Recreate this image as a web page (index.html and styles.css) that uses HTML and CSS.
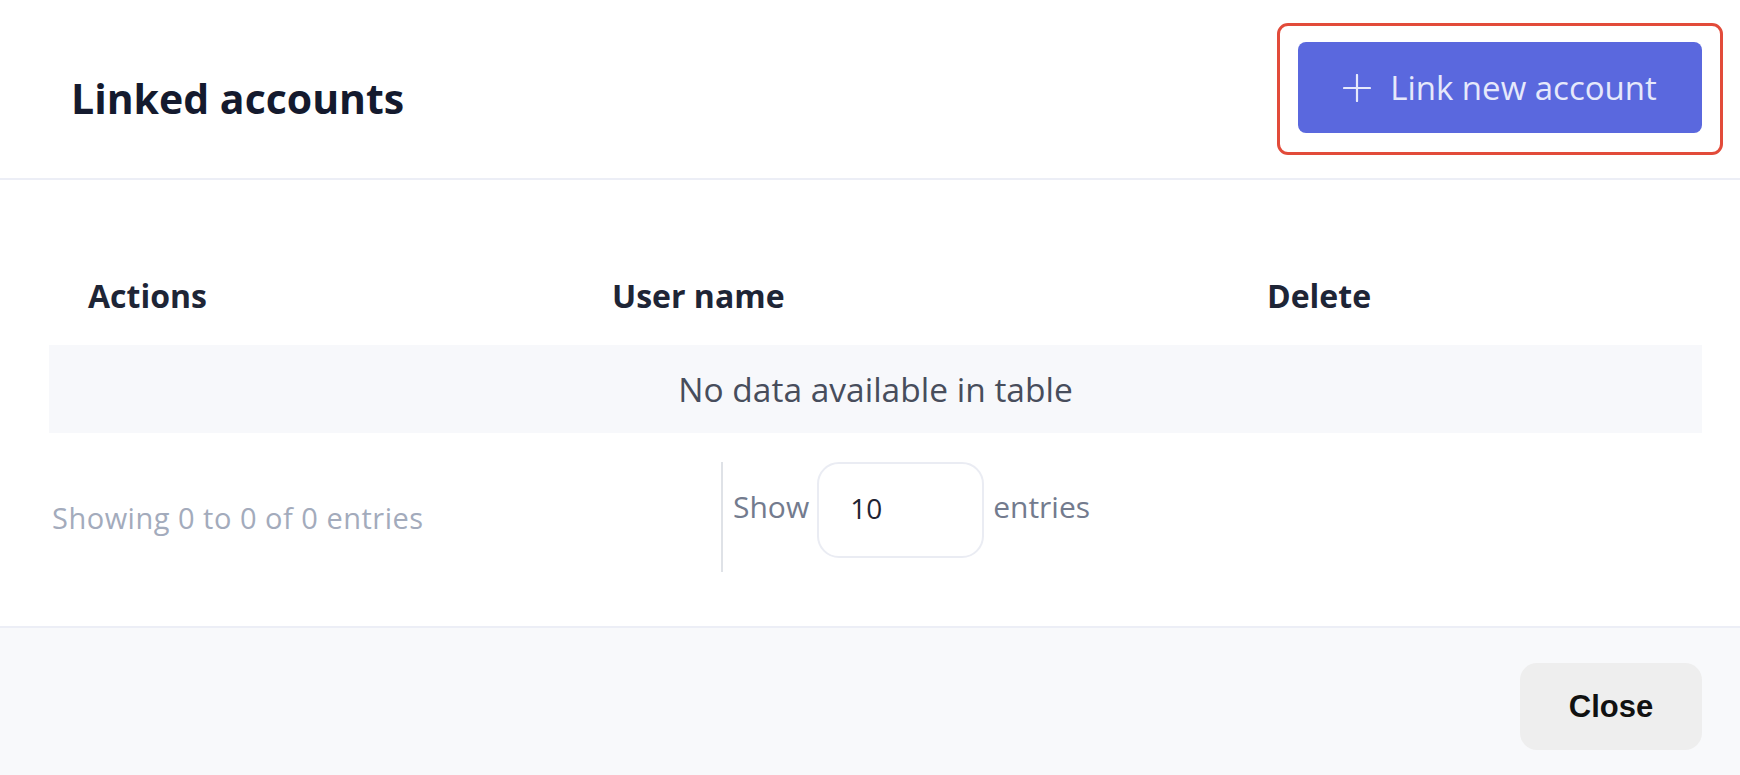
FILE: index.html
```html
<!DOCTYPE html>
<html lang="en">
<head>
<meta charset="utf-8">
<title>Linked accounts</title>
<link rel="stylesheet" href="styles.css">
</head>
<body>
<div class="modal">
  <header class="modal-header">
    <h2 class="title">Linked accounts</h2>
    <div class="highlight">
      <button class="btn-primary" type="button">
        <svg class="plus" width="28" height="28" viewBox="0 0 28 28" aria-hidden="true">
          <path d="M14 1v26M1 14h26" stroke="currentColor" stroke-width="2.2" stroke-linecap="round" fill="none"/>
        </svg>
        <span>Link new account</span>
      </button>
    </div>
  </header>
  <section class="modal-body">
    <div class="table">
      <div class="thead">
        <div class="th">Actions</div>
        <div class="th">User name</div>
        <div class="th">Delete</div>
      </div>
      <div class="empty">No data available in table</div>
    </div>
    <div class="table-footer">
      <div class="info">Showing 0 to 0 of 0 entries</div>
      <div class="length">
        <span class="length-label">Show</span>
        <div class="select">10</div>
        <span class="length-label">entries</span>
      </div>
    </div>
  </section>
  <footer class="modal-footer">
    <button class="btn-close" type="button">Close</button>
  </footer>
</div>
</body>
</html>
```

FILE: styles.css
```css
html, body {
  margin: 0;
  padding: 0;
  background: #ffffff;
}

body {
  font-family: "Open Sans", "Noto Sans", sans-serif;
  overflow: hidden;
}

.modal {
  width: 1740px;
  height: 775px;
  display: flex;
  flex-direction: column;
}

/* Header */
.modal-header {
  display: flex;
  justify-content: space-between;
  align-items: flex-start;
  height: 155px;
  padding: 23px 17px 0 71px;
  border-bottom: 2px solid #eceef6;
}

.title {
  margin: 51px 0 0;
  font-size: 41px;
  font-weight: 700;
  line-height: 1.2;
  color: #141a2e;
}

.highlight {
  border: 3px solid #e24b3a;
  border-radius: 11px;
  padding: 16px 18px 19px;
}

.btn-primary {
  width: 404px;
  height: 91px;
  display: flex;
  align-items: center;
  justify-content: center;
  gap: 19px;
  border: none;
  border-radius: 8px;
  background: #5a68de;
  color: #e6e9fb;
  font-family: "Open Sans", "Noto Sans", sans-serif;
  font-size: 33px;
  font-weight: 400;
  padding: 0;
}

.plus {
  display: block;
  flex: none;
}

/* Body */
.modal-body {
  padding: 66px 38px 54px 49px;
}

.thead {
  display: grid;
  grid-template-columns: 524px 655px 1fr;
  height: 99px;
  align-items: center;
}

.th {
  padding-left: 39px;
  font-size: 32px;
  font-weight: 700;
  color: #1e2536;
}

.empty {
  height: 88px;
  display: flex;
  align-items: center;
  justify-content: center;
  background: #f7f8fb;
  font-size: 33.5px;
  color: #474d5c;
}

.table-footer {
  margin-top: 29px;
  height: 110px;
  display: flex;
}

.info {
  width: 669px;
  padding-left: 3px;
  display: flex;
  align-items: center;
  font-size: 29px;
  letter-spacing: 0.5px;
  color: #a3abbc;
}

.length {
  display: flex;
  align-items: flex-start;
  gap: 8px;
  padding-left: 10px;
  border-left: 2px solid #dfe2e7;
}

.length-label {
  height: 96px;
  line-height: 90px;
  font-size: 30px;
  color: #737b8e;
}

.length-label:last-child {
  margin-left: 1px;
}

.select {
  box-sizing: border-box;
  width: 167px;
  height: 96px;
  border: 2px solid #eaecf3;
  border-radius: 22px;
  padding-left: 31px;
  line-height: 88px;
  font-size: 28px;
  color: #1f2433;
}

/* Footer */
.modal-footer {
  flex: 1;
  display: flex;
  justify-content: flex-end;
  align-items: flex-start;
  padding: 35px 38px 0;
  background: #f8f9fb;
  border-top: 2px solid #eceef6;
}

.btn-close {
  width: 182px;
  height: 87px;
  border: none;
  border-radius: 17px;
  background: #eeeeee;
  color: #111111;
  font-family: "Liberation Sans", Arial, sans-serif;
  font-size: 31px;
  font-weight: 700;
  padding: 0;
}
```
